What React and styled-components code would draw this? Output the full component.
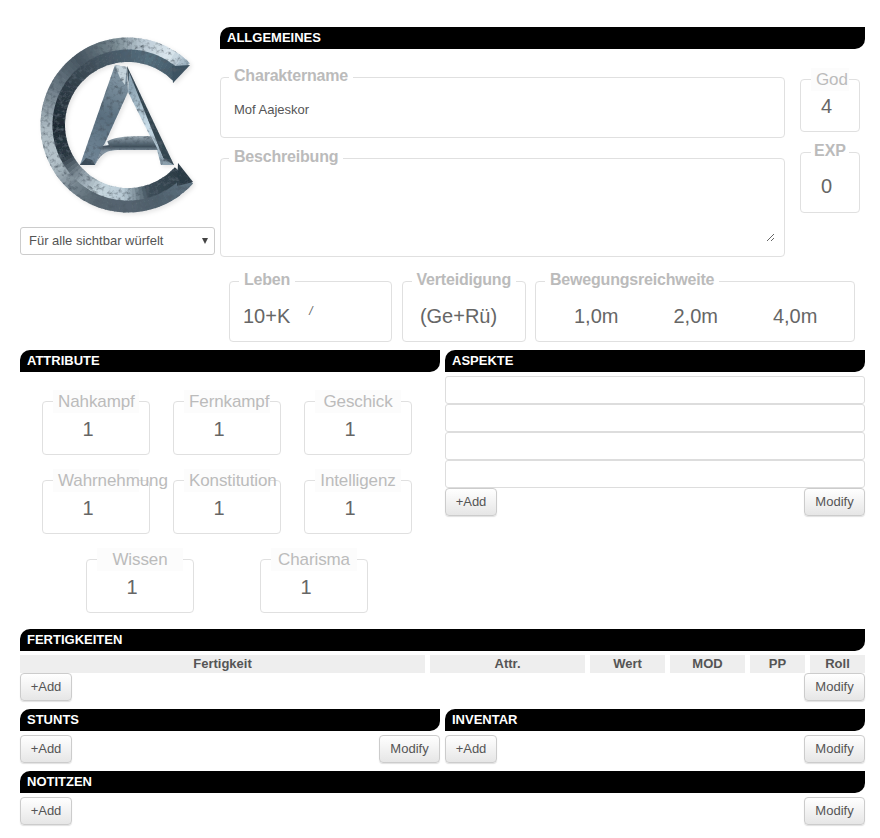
import React from "react";
import styled, { createGlobalStyle } from "styled-components";

const GlobalStyle = createGlobalStyle`
  html, body {
    margin: 0;
    background: #fff;
    font-family: "Liberation Sans", Arial, sans-serif;
    color: #555;
  }
`;

// ring colours, by angle clockwise from 12 o'clock
const outerStops = [
  [45, "#9db2c0"], [32, "#dbe7ee"], [12, "#bccbd5"], [-8, "#76878f"], [-35, "#45545f"],
  [-62, "#6b7a85"], [-90, "#abb9c1"], [-115, "#b6c4cc"], [-135, "#7b8a94"], [-155, "#56656f"],
  [-180, "#55646f"], [-200, "#4f606c"], [-228, "#5f7482"],
];
const innerStops = [
  [45, "#425867"], [20, "#56707f"], [0, "#4d6170"], [-30, "#3f4e59"], [-60, "#2d3a44"],
  [-90, "#1e2a33"], [-115, "#2b3842"], [-135, "#8a99a3"], [-155, "#c6d6de"], [-175, "#b8cad5"],
  [-195, "#3d4e59"], [-228, "#2a3943"],
];

const hexToRgb = (h) => [1, 3, 5].map((i) => parseInt(h.slice(i, i + 2), 16));

function colorAt(stops, a) {
  for (let i = 0; i < stops.length - 1; i++) {
    const [a1, c1] = stops[i];
    const [a2, c2] = stops[i + 1];
    if (a <= a1 && a >= a2) {
      const t = (a1 - a) / (a1 - a2);
      const A = hexToRgb(c1);
      const B = hexToRgb(c2);
      return `rgb(${A.map((v, k) => Math.round(v + (B[k] - v) * t)).join(",")})`;
    }
  }
  return stops[stops.length - 1][1];
}

function point(r, a) {
  const rad = (a * Math.PI) / 180;
  return `${(128 + r * Math.sin(rad)).toFixed(2)} ${(125 - r * Math.cos(rad)).toFixed(2)}`;
}

function RingBand({ r1, r2, stops }) {
  const parts = [];
  for (let a = 45; a > -228; a -= 3) {
    const next = Math.max(a - 3.4, -228);
    parts.push(
      <path
        key={a}
        d={`M${point(r2, a)}A${r2} ${r2} 0 0 0 ${point(r2, next)}L${point(r1, next)}A${r1} ${r1} 0 0 1 ${point(r1, a)}Z`}
        fill={colorAt(stops, a)}
      />
    );
  }
  return <g>{parts}</g>;
}

function Logo() {
  return (
    <LogoSvg viewBox="20 27 195 200">
      <defs>
        <linearGradient id="leftLeg" gradientUnits="userSpaceOnUse" x1="125" y1="80" x2="85" y2="165">
          <stop offset="0" stopColor="#7f93a1" />
          <stop offset="0.45" stopColor="#5a6f7f" />
          <stop offset="1" stopColor="#74899a" />
        </linearGradient>
        <linearGradient id="rightLeg" gradientUnits="userSpaceOnUse" x1="128" y1="90" x2="165" y2="165">
          <stop offset="0" stopColor="#8fa6b5" />
          <stop offset="0.5" stopColor="#c9dde9" />
          <stop offset="1" stopColor="#8ea3b1" />
        </linearGradient>
        <linearGradient id="bar" gradientUnits="userSpaceOnUse" x1="0" y1="136" x2="0" y2="151">
          <stop offset="0" stopColor="#a3b1ba" />
          <stop offset="0.3" stopColor="#6f808c" />
          <stop offset="0.7" stopColor="#3f505c" />
          <stop offset="1" stopColor="#8393a0" />
        </linearGradient>
        <filter id="metal" x="-5%" y="-5%" width="110%" height="110%">
          <feTurbulence type="fractalNoise" baseFrequency="0.22" numOctaves="3" seed="11" result="n" />
          <feColorMatrix in="n" type="matrix" values="0 0 0 0 0.08  0 0 0 0 0.11  0 0 0 0 0.14  2.4 0 0 0 -1.15" result="spots" />
          <feComposite in="spots" in2="SourceAlpha" operator="in" result="clip" />
          <feMerge>
            <feMergeNode in="SourceGraphic" />
            <feMergeNode in="clip" />
          </feMerge>
        </filter>
        <filter id="glow" x="-10%" y="-10%" width="120%" height="120%">
          <feDropShadow dx="2" dy="2" stdDeviation="2" floodColor="#000" floodOpacity="0.1" />
        </filter>
      </defs>
      <g filter="url(#glow)">
        <g filter="url(#metal)">
          <RingBand r1={75} r2={87.5} stops={outerStops} />
          <RingBand r1={63} r2={75.5} stops={innerStops} />
          <path d="M190 65L173 83L172 66Z" fill="#3e5362" />
          <path d="M193 182L178 163L177 186Z" fill="#2b3a45" />
        </g>
        <g filter="url(#metal)">
          <path d="M115 65L127 67L128 92L95 165L80 165Z" fill="url(#leftLeg)" />
          <path d="M127 66L174 165L166 165L128 80Z" fill="#33444f" />
          <path d="M128 92L129 72L166 165L161 165L157 150Z" fill="url(#rightLeg)" />
          <path d="M115 65L127 67L125 85L120 78Z" fill="#c5d3db" />
          <path d="M95 165C101 153 108 150 118 150L158 150L151 136C122 136 108 137 103 146Z" fill="url(#bar)" />
          <path d="M103 146L107 141L109 145Z" fill="#eef4f7" />
          <path d="M80 165L95 165L92 160L86 158Z" fill="#3b4c58" />
          <path d="M161 165L174 165L160 156Z" fill="#8ca0ad" />
        </g>
      </g>
    </LogoSvg>
  );
}

function Stat({ label, value }) {
  return (
    <StatBox>
      <StatLegend>{label}</StatLegend>
      <StatValue>{value}</StatValue>
    </StatBox>
  );
}

function Actions() {
  return (
    <ActionRow>
      <ActionButton>+Add</ActionButton>
      <ActionButton $wide>Modify</ActionButton>
    </ActionRow>
  );
}

const attributeRows = [
  ["Nahkampf", "Fernkampf", "Geschick"],
  ["Wahrnehmung", "Konstitution", "Intelligenz"],
];

const skillColumns = [
  ["Fertigkeit", 405],
  ["Attr.", 155],
  ["Wert", 75],
  ["MOD", 75],
  ["PP", 55],
  ["Roll", 55],
];

export default function App() {
  return (
    <Page>
      <GlobalStyle />
      <TopArea>
        <LogoColumn>
          <Logo />
          <RollSelect>
            <span>Für alle sichtbar würfelt</span>
            <SelectArrow />
          </RollSelect>
        </LogoColumn>
        <div>
          <SectionBar>Allgemeines</SectionBar>
          <GeneralRow>
            <FieldStack>
              <Field>
                <NameLegend>Charaktername</NameLegend>
                <NameText>Mof Aajeskor</NameText>
              </Field>
              <Field>
                <NameLegend>Beschreibung</NameLegend>
                <DescriptionBox />
              </Field>
            </FieldStack>
            <FieldStack>
              <GodBox>
                <StatLegend>God</StatLegend>
                <GodValue>4</GodValue>
              </GodBox>
              <GodBox>
                <ExpLegend>EXP</ExpLegend>
                <ExpValue>0</ExpValue>
              </GodBox>
            </FieldStack>
          </GeneralRow>
          <DerivedRow>
            <Field>
              <FieldLegend>Leben</FieldLegend>
              <DerivedValue>
                10+K
                <Slash>/</Slash>
              </DerivedValue>
            </Field>
            <Field>
              <FieldLegend>Verteidigung</FieldLegend>
              <DerivedValue $center>(Ge+Rü)</DerivedValue>
            </Field>
            <Field>
              <FieldLegend>Bewegungsreichweite</FieldLegend>
              <MoveValues>
                <span>1,0m</span>
                <span>2,0m</span>
                <span>4,0m</span>
              </MoveValues>
            </Field>
          </DerivedRow>
        </div>
      </TopArea>

      <TwoColumns>
        <div>
          <SectionBar>Attribute</SectionBar>
          <AttributeArea>
            {attributeRows.map((row) => (
              <AttributeRow key={row[0]}>
                {row.map((name) => (
                  <Stat key={name} label={name} value="1" />
                ))}
              </AttributeRow>
            ))}
            <LastAttributeRow>
              <Stat label="Wissen" value="1" />
              <Stat label="Charisma" value="1" />
            </LastAttributeRow>
          </AttributeArea>
        </div>
        <div>
          <SectionBar>Aspekte</SectionBar>
          <AspectList>
            <AspectLine />
            <AspectLine />
            <AspectLine />
            <AspectLine />
          </AspectList>
          <Actions />
        </div>
      </TwoColumns>

      <SectionBar>Fertigkeiten</SectionBar>
      <SkillHead>
        {skillColumns.map(([name, width]) => (
          <SkillCell key={name} $width={width}>
            {name}
          </SkillCell>
        ))}
      </SkillHead>
      <Actions />

      <SplitSections>
        <div>
          <SectionBar>Stunts</SectionBar>
          <ActionsGap>
            <Actions />
          </ActionsGap>
        </div>
        <div>
          <SectionBar>Inventar</SectionBar>
          <ActionsGap>
            <Actions />
          </ActionsGap>
        </div>
      </SplitSections>

      <NotesSection>
        <SectionBar>Notitzen</SectionBar>
        <ActionsGap>
          <Actions />
        </ActionsGap>
      </NotesSection>
    </Page>
  );
}

const Page = styled.div`
  box-sizing: border-box;
  width: 880px;
  height: 838px;
  padding: 27px 15px 0 20px;
  overflow: hidden;
`;

const TopArea = styled.div`
  display: grid;
  grid-template-columns: 195px 645px;
  column-gap: 5px;
`;

const LogoColumn = styled.div`
  display: flex;
  flex-direction: column;
`;

const LogoSvg = styled.svg`
  display: block;
  width: 195px;
  height: 200px;
`;

const RollSelect = styled.div`
  box-sizing: border-box;
  height: 28px;
  display: flex;
  align-items: center;
  justify-content: space-between;
  padding: 0 6px 2px 8px;
  border: 1px solid #ccc;
  border-radius: 3px;
  font-size: 13px;
  color: #555;
`;

const SelectArrow = styled.i`
  width: 0;
  height: 0;
  margin-top: 2px;
  border-left: 3.5px solid transparent;
  border-right: 3.5px solid transparent;
  border-top: 6px solid #444;
`;

const SectionBar = styled.div`
  height: 22px;
  padding-left: 7px;
  background: #000;
  border-radius: 10px 0 10px 0;
  color: #fff;
  font-size: 13px;
  font-weight: bold;
  line-height: 21px;
  text-transform: uppercase;
`;

const GeneralRow = styled.div`
  display: grid;
  grid-template-columns: 565px 60px;
  column-gap: 15px;
  padding-top: 19px;
`;

const FieldStack = styled.div`
  display: flex;
  flex-direction: column;
  gap: 11px;
  align-items: stretch;
`;

const Field = styled.fieldset`
  min-width: 0;
  margin: 0;
  padding: 0;
  border: 1px solid #e0e0e0;
  border-radius: 4px;
`;

const FieldLegend = styled.legend`
  height: 18px;
  margin-left: 9px;
  padding: 0 5px;
  font-size: 16px;
  line-height: 15px;
  font-weight: bold;
  letter-spacing: -0.2px;
  color: #bbb;
`;

const NameLegend = styled(FieldLegend)`
  margin-left: 8px;
`;

const NameText = styled.div`
  height: 51px;
  padding-left: 13px;
  font-size: 13px;
  line-height: 48px;
  color: #555;
`;

const DescriptionBox = styled.textarea`
  display: block;
  box-sizing: border-box;
  width: 554px;
  height: 75px;
  margin-bottom: 14px;
  border: 0;
  outline: 0;
  padding: 0;
  background: transparent;
`;

const StatBox = styled.fieldset`
  box-sizing: content-box;
  width: 106px;
  min-width: 0;
  margin: 0;
  padding: 0;
  border: 1px solid #e0e0e0;
  border-radius: 4px;
`;

const GodBox = styled(StatBox)`
  width: 58px;
`;

const StatLegend = styled.legend`
  box-sizing: border-box;
  width: calc(100% - 20px);
  height: 23px;
  margin: 0 auto -5px;
  padding: 0 5px;
  background: #fcfcfc;
  font-size: 17px;
  font-weight: normal;
  letter-spacing: -0.1px;
  line-height: 23px;
  text-align: center;
  white-space: nowrap;
  color: #bbb;
`;

const StatValue = styled.div`
  height: 46px;
  padding-right: 16px;
  font-size: 20px;
  line-height: 42px;
  text-align: center;
  color: #666;
`;

const GodValue = styled(StatValue)`
  height: 45px;
  padding-right: 7px;
  line-height: 40px;
`;

const ExpLegend = styled.legend`
  height: 18px;
  margin: 0 auto;
  padding: 0 3px;
  font-size: 16px;
  font-weight: bold;
  line-height: 15px;
  color: #bbb;
`;

const ExpValue = styled.div`
  height: 51px;
  padding-right: 7px;
  font-size: 20px;
  line-height: 50px;
  text-align: center;
  color: #666;
`;

const DerivedRow = styled.div`
  display: grid;
  grid-template-columns: 163px 124px 320px;
  column-gap: 9.5px;
  margin: 15px 0 8px 9px;
`;

const DerivedValue = styled.div`
  height: 51px;
  padding-left: ${(p) => (p.$center ? 0 : 13)}px;
  padding-right: ${(p) => (p.$center ? 10 : 0)}px;
  font-size: 20px;
  line-height: 52px;
  text-align: ${(p) => (p.$center ? "center" : "left")};
  color: #666;
`;

const Slash = styled.span`
  margin-left: 19px;
  font-size: 12px;
  font-style: italic;
  line-height: 0;
  vertical-align: 8px;
`;

const MoveValues = styled.div`
  height: 51px;
  display: flex;
  gap: 55px;
  padding-left: 38px;
  font-size: 20px;
  line-height: 52px;
  color: #666;
`;

const TwoColumns = styled.div`
  display: grid;
  grid-template-columns: 420px 420px;
  column-gap: 5px;
  height: 279px;
`;

const AttributeArea = styled.div`
  padding: 18px 0 0 22px;
`;

const AttributeRow = styled.div`
  display: flex;
  gap: 23px;
  margin-bottom: 14px;
`;

const LastAttributeRow = styled(AttributeRow)`
  gap: 66px;
  margin-left: 44px;
`;

const AspectList = styled.div`
  padding-top: 4px;
`;

const AspectLine = styled.div`
  box-sizing: border-box;
  height: 28px;
  border: 1px solid #ddd;
  border-radius: 3px;
`;

const ActionRow = styled.div`
  display: flex;
  justify-content: space-between;
`;

const ActionsGap = styled.div`
  padding-top: 4px;
`;

const ActionButton = styled.button`
  box-sizing: border-box;
  width: ${(p) => (p.$wide ? 61 : 52)}px;
  height: 28px;
  padding: 0 0 2px;
  border: 1px solid #ccc;
  border-radius: 4px;
  background: linear-gradient(#fff, #e6e6e6);
  box-shadow: 0 1px 1px rgba(0, 0, 0, 0.12);
  font-family: inherit;
  font-size: 13px;
  color: #555;
`;

const SkillHead = styled.div`
  display: flex;
  gap: 5px;
  margin-top: 4px;
`;

const SkillCell = styled.div`
  width: ${(p) => p.$width}px;
  height: 18px;
  background: #eee;
  font-size: 13px;
  font-weight: bold;
  line-height: 18px;
  text-align: center;
  color: #555;
`;

const SplitSections = styled.div`
  display: grid;
  grid-template-columns: 420px 420px;
  column-gap: 5px;
  margin-top: 8px;
`;

const NotesSection = styled.div`
  margin-top: 8px;
`;
